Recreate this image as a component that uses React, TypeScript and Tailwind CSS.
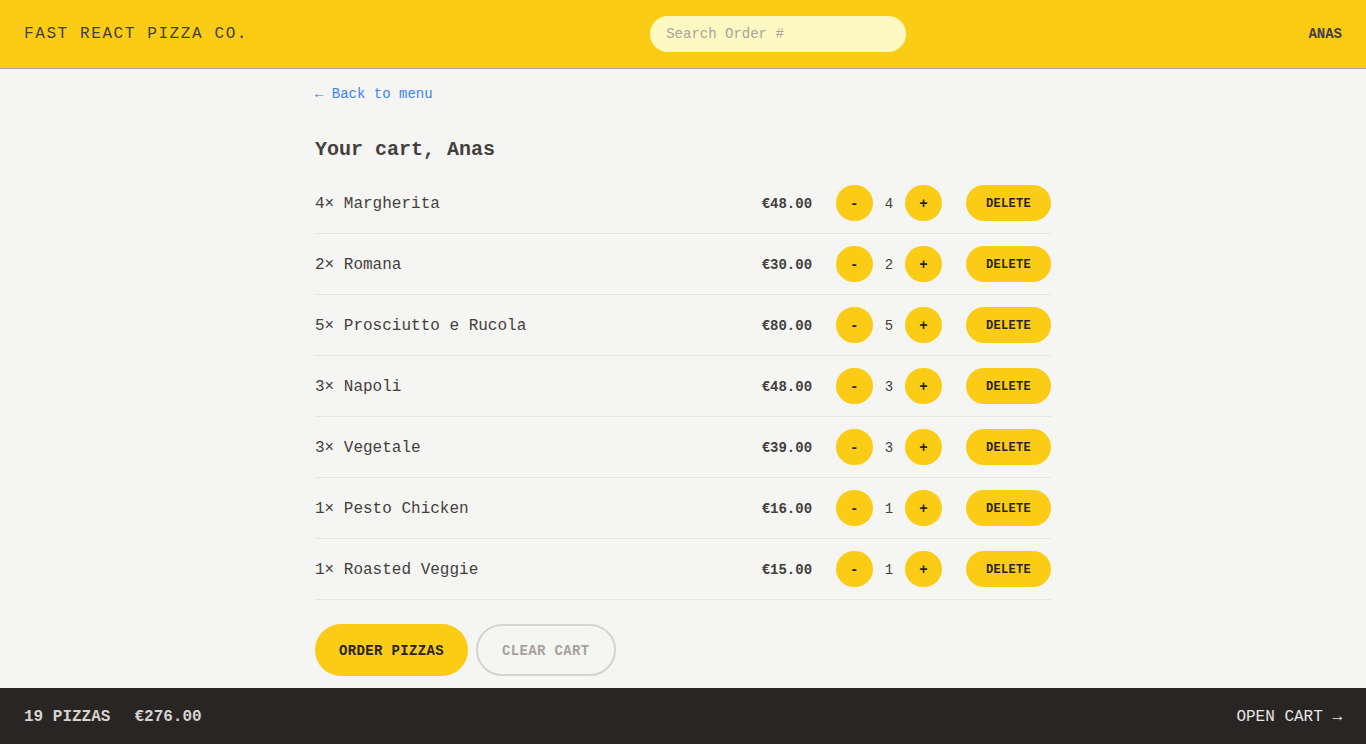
const cart = [
  { id: 1, name: "Margherita", qty: 4, total: 48 },
  { id: 2, name: "Romana", qty: 2, total: 30 },
  { id: 3, name: "Prosciutto e Rucola", qty: 5, total: 80 },
  { id: 4, name: "Napoli", qty: 3, total: 48 },
  { id: 5, name: "Vegetale", qty: 3, total: 39 },
  { id: 6, name: "Pesto Chicken", qty: 1, total: 16 },
  { id: 7, name: "Roasted Veggie", qty: 1, total: 15 },
];

const euro = (n: number) => `€${n.toFixed(2)}`;

const base =
  "inline-block rounded-full bg-[#facc15] font-semibold uppercase tracking-wide text-stone-800";

function CartItem({ name, qty, total }: { name: string; qty: number; total: number }) {
  return (
    <li className="flex items-center justify-between py-3">
      <p className="pt-0.5">
        {qty}&times; {name}
      </p>
      <div className="flex items-center gap-6">
        <p className="pt-px text-sm font-bold">{euro(total)}</p>
        <div className="flex items-center gap-3">
          <button className={`${base} px-3.5 pb-[7px] pt-[9px] text-sm`}>-</button>
          <span className="pt-px text-sm font-medium">{qty}</span>
          <button className={`${base} px-3.5 pb-[7px] pt-[9px] text-sm`}>+</button>
        </div>
        <button className={`${base} px-5 pb-[9px] pt-[11px] text-xs`}>Delete</button>
      </div>
    </li>
  );
}

export default function App() {
  const pizzas = cart.reduce((s, i) => s + i.qty, 0);
  const price = cart.reduce((s, i) => s + i.total, 0);

  return (
    <div className="grid h-screen grid-rows-[auto_1fr_auto] bg-[#f5f5f4] font-['Liberation_Mono',monospace] text-[#44403c]">
      <header className="flex h-[69px] items-center justify-between border-b border-[#a8a29e] bg-[#facc15] px-6 uppercase">
        <span className="tracking-widest">Fast React Pizza Co.</span>
        <input
          className="w-64 rounded-full bg-[#fef9c3] px-4 py-2 text-sm placeholder:text-[#a8a29e] focus:outline-none"
          placeholder="Search Order #"
        />
        <span className="text-sm font-semibold">Anas</span>
      </header>

      <main className="overflow-hidden">
        <div className="mx-auto max-w-3xl px-4 py-3">
          <div className="pt-px">
            <a href="#" className="text-sm text-[#3b82f6]">
              &larr; Back to menu
            </a>
          </div>
          <h2 className="mt-7 pt-0.5 text-xl font-semibold">Your cart, Anas</h2>
          <ul className="mt-[9px] divide-y divide-stone-200 border-b border-stone-200">
            {cart.map((item) => (
              <CartItem key={item.id} {...item} />
            ))}
          </ul>
          <div className="mt-6 space-x-2">
            <button className={`${base} px-6 pb-[15px] pt-[17px] text-sm`}>Order pizzas</button>
            <button className="inline-block rounded-full border-2 border-stone-300 px-6 pb-[13px] pt-[15px] text-sm font-semibold uppercase tracking-wide text-[#a8a29e]">
              Clear cart
            </button>
          </div>
        </div>
      </main>

      <footer className="flex items-center justify-between bg-[#292524] px-6 pb-[15px] pt-[17px] uppercase text-stone-200">
        <p className="space-x-6 font-semibold text-stone-300">
          <span>{pizzas} pizzas</span>
          <span>{euro(price)}</span>
        </p>
        <a href="#">Open cart &rarr;</a>
      </footer>
    </div>
  );
}
